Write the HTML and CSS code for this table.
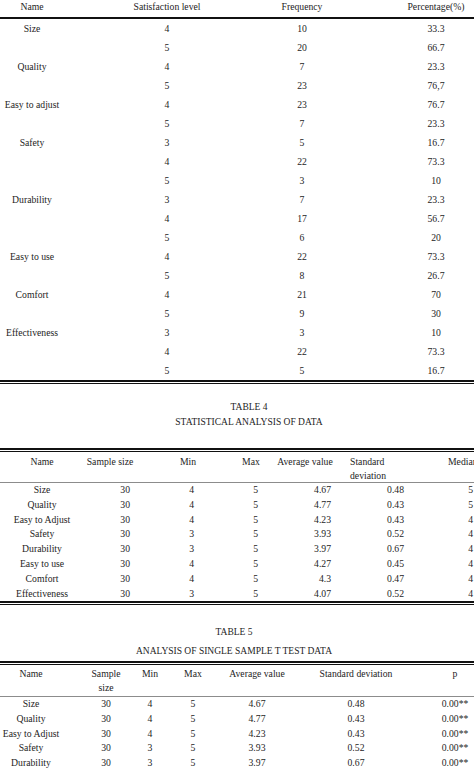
FILE: index.html
```html
<!DOCTYPE html>
<html lang="en">
<head>
<meta charset="utf-8">
<title>Survey tables</title>
<link rel="stylesheet" href="styles.css">
</head>
<body>
<main class="page">
  <section class="block">
    <table class="tbl t3">
      <colgroup><col class="w64"><col class="w206"><col class="w128"><col class="w76"></colgroup>
      <thead>
        <tr><th>Name</th><th>Satisfaction level</th><th>Frequency</th><th>Percentage(%)</th></tr>
      </thead>
      <tbody>
        <tr><td>Size</td><td>4</td><td>10</td><td>33.3</td></tr>
        <tr><td></td><td>5</td><td>20</td><td>66.7</td></tr>
        <tr><td>Quality</td><td>4</td><td>7</td><td>23.3</td></tr>
        <tr><td></td><td>5</td><td>23</td><td>76,7</td></tr>
        <tr><td>Easy to adjust</td><td>4</td><td>23</td><td>76.7</td></tr>
        <tr><td></td><td>5</td><td>7</td><td>23.3</td></tr>
        <tr><td>Safety</td><td>3</td><td>5</td><td>16.7</td></tr>
        <tr><td></td><td>4</td><td>22</td><td>73.3</td></tr>
        <tr><td></td><td>5</td><td>3</td><td>10</td></tr>
        <tr><td>Durability</td><td>3</td><td>7</td><td>23.3</td></tr>
        <tr><td></td><td>4</td><td>17</td><td>56.7</td></tr>
        <tr><td></td><td>5</td><td>6</td><td>20</td></tr>
        <tr><td>Easy to use</td><td>4</td><td>22</td><td>73.3</td></tr>
        <tr><td></td><td>5</td><td>8</td><td>26.7</td></tr>
        <tr><td>Comfort</td><td>4</td><td>21</td><td>70</td></tr>
        <tr><td></td><td>5</td><td>9</td><td>30</td></tr>
        <tr><td>Effectiveness</td><td>3</td><td>3</td><td>10</td></tr>
        <tr><td></td><td>4</td><td>22</td><td>73.3</td></tr>
        <tr><td></td><td>5</td><td>5</td><td>16.7</td></tr>
      </tbody>
    </table>
    <div class="rule-double"></div>
  </section>

  <section class="block">
    <div class="cap cap-t4">
      <div class="cap-num">TABLE 4</div>
      <div class="cap-title">STATISTICAL ANALYSIS OF DATA</div>
    </div>
    <div class="rule-double rule-t4"></div>
    <table class="tbl t4">
      <colgroup><col class="w84"><col class="w52"><col class="w104"><col class="w22"><col class="w86"><col class="w92"><col class="w70"></colgroup>
      <thead>
        <tr><th>Name</th><th>Sample size</th><th>Min</th><th>Max</th><th>Average value</th><th>Standard deviation</th><th>Median</th></tr>
      </thead>
      <tbody>
        <tr><td>Size</td><td>30</td><td>4</td><td>5</td><td>4.67</td><td>0.48</td><td>5</td></tr>
        <tr><td>Quality</td><td>30</td><td>4</td><td>5</td><td>4.77</td><td>0.43</td><td>5</td></tr>
        <tr><td>Easy to Adjust</td><td>30</td><td>4</td><td>5</td><td>4.23</td><td>0.43</td><td>4</td></tr>
        <tr><td>Safety</td><td>30</td><td>3</td><td>5</td><td>3.93</td><td>0.52</td><td>4</td></tr>
        <tr><td>Durability</td><td>30</td><td>3</td><td>5</td><td>3.97</td><td>0.67</td><td>4</td></tr>
        <tr><td>Easy to use</td><td>30</td><td>4</td><td>5</td><td>4.27</td><td>0.45</td><td>4</td></tr>
        <tr><td>Comfort</td><td>30</td><td>4</td><td>5</td><td>4.3</td><td>0.47</td><td>4</td></tr>
        <tr><td>Effectiveness</td><td>30</td><td>3</td><td>5</td><td>4.07</td><td>0.52</td><td>4</td></tr>
      </tbody>
    </table>
    <div class="rule-double"></div>
  </section>

  <section class="block">
    <div class="cap cap-t5">
      <div class="cap-num">TABLE 5</div>
      <div class="cap-title">ANALYSIS OF SINGLE SAMPLE T TEST DATA</div>
    </div>
    <div class="rule-double rule-t5"></div>
    <table class="tbl t5">
      <colgroup><col class="w66"><col class="w64"><col class="w40"><col class="w46"><col class="w82"><col class="w116"><col class="w82"></colgroup>
      <thead>
        <tr><th>Name</th><th>Sample size</th><th>Min</th><th>Max</th><th>Average value</th><th>Standard deviation</th><th>p</th></tr>
      </thead>
      <tbody>
        <tr><td>Size</td><td>30</td><td>4</td><td>5</td><td>4.67</td><td>0.48</td><td>0.00**</td></tr>
        <tr><td>Quality</td><td>30</td><td>4</td><td>5</td><td>4.77</td><td>0.43</td><td>0.00**</td></tr>
        <tr><td>Easy to Adjust</td><td>30</td><td>4</td><td>5</td><td>4.23</td><td>0.43</td><td>0.00**</td></tr>
        <tr><td>Safety</td><td>30</td><td>3</td><td>5</td><td>3.93</td><td>0.52</td><td>0.00**</td></tr>
        <tr><td>Durability</td><td>30</td><td>3</td><td>5</td><td>3.97</td><td>0.67</td><td>0.00**</td></tr>
      </tbody>
    </table>
  </section>
</main>
</body>
</html>
```

FILE: styles.css
```css
* { box-sizing: border-box; }

html, body {
  margin: 0;
  padding: 0;
  background: #ffffff;
}

body {
  font-family: "Liberation Serif", "Times New Roman", serif;
  color: #242424;
  font-size: 9.7px;
  width: 474px;
  overflow: hidden;
}

.page {
  width: 474px;
  height: 770px;
  overflow: hidden;
}

.block {
  width: 474px;
}

/* column widths */
.w22 { width: 22px; }
.w40 { width: 40px; }
.w46 { width: 46px; }
.w52 { width: 52px; }
.w64 { width: 64px; }
.w66 { width: 66px; }
.w70 { width: 70px; }
.w76 { width: 76px; }
.w82 { width: 82px; }
.w84 { width: 84px; }
.w86 { width: 86px; }
.w92 { width: 92px; }
.w104 { width: 104px; }
.w116 { width: 116px; }
.w128 { width: 128px; }
.w206 { width: 206px; }

.tbl {
  border-collapse: separate;
  border-spacing: 0;
  table-layout: fixed;
}

.tbl th,
.tbl td {
  padding: 0;
  font-weight: normal;
  text-align: center;
  white-space: nowrap;
}

.tbl th { vertical-align: top; }
.tbl td { vertical-align: middle; }

/* rules */
.rule-double {
  width: 474px;
  height: 4px;
  border-top: 2px solid #111;
  border-bottom: 1px solid #111;
}

/* ---------- table 3 ---------- */
.t3 { width: 474px; }

.t3 th {
  line-height: 14px;
  padding-bottom: 3px;
  border-bottom: 2px solid #111;
}

.t3 td {
  line-height: 19px;
  height: 19px;
}

.t3 th:nth-child(3),
.t3 td:nth-child(3) { padding-right: 64px; }

/* ---------- captions ---------- */
.cap {
  text-align: center;
  font-size: 9.5px;
  line-height: 15px;
  letter-spacing: 0;
}

.cap-t4 {
  width: 498px;
  margin-top: 16px;
}

.cap-t5 {
  width: 468px;
  margin-top: 20px;
}

.cap-t5 .cap-title { margin-top: 4px; }

.rule-t4 { margin-top: 18px; }
.rule-t5 { margin-top: 2px; }

/* ---------- table 4 ---------- */
.t4 { width: 510px; }

.t4 th {
  padding-top: 3px;
  line-height: 13.5px;
  border-bottom: 1px solid #8c8c8c;
}

.t4 td { line-height: 14.8px; }

.t4 td:nth-child(n+2) { text-align: right; }
.t4 td:nth-child(2) { padding-right: 6px; }
.t4 td:nth-child(3) { padding-right: 46px; }
.t4 td:nth-child(4) { padding-right: 4px; }
.t4 td:nth-child(5) { padding-right: 17px; }
.t4 td:nth-child(6) { padding-right: 36px; }
.t4 td:nth-child(7) { padding-right: 37px; }

.t4 th:nth-child(6) {
  text-align: left;
  white-space: normal;
  padding-left: 2px;
  padding-right: 40px;
}

.t4 th:nth-child(7) {
  text-align: left;
  padding-left: 8px;
}

/* ---------- table 5 ---------- */
.t5 { width: 496px; }

.t5 th {
  padding-top: 2px;
  padding-bottom: 1px;
  line-height: 14px;
  border-bottom: 1px solid #8c8c8c;
}

.t5 td { line-height: 14.6px; }

.t5 th:nth-child(1),
.t5 td:nth-child(1) { padding-right: 4px; }

.t5 th:nth-child(2),
.t5 td:nth-child(2) {
  padding-left: 20px;
  padding-right: 4px;
}

.t5 th:nth-child(2) { white-space: normal; }
```
